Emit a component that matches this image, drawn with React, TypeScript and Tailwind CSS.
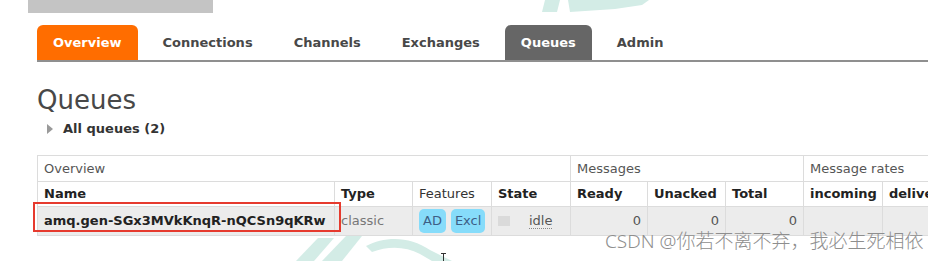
import React from "react";

const tabs = ["Overview", "Connections", "Channels", "Exchanges", "Queues", "Admin"];

function Cell({
  w,
  children,
  className = "",
}: {
  w: string;
  children?: React.ReactNode;
  className?: string;
}) {
  return (
    <div className={"shrink-0 h-full flex items-center px-[6px] border-r border-[#dcdcdc] whitespace-nowrap overflow-hidden " + w + " " + className}>
      {children}
    </div>
  );
}

export default function App() {
  return (
    <div
      className="relative w-[950px] h-[261px] overflow-hidden bg-white text-[#444]"
      style={{ fontFamily: '"DejaVu Sans", Verdana, sans-serif' }}
    >
      {/* watermark shapes behind */}
      <svg className="absolute left-0 top-0 pointer-events-none" width="950" height="261">
        <path d="M545 0 L560 0 L557 12 L542 12 Z" fill="#d3ece6" />
        <path d="M568 0 L649 0 L642 5 L615 9 L570 12 Z" fill="#d3ece6" />
        <path d="M296 261 L318 238 L334 238 L314 261 Z" fill="#d3ece6" />
        <path d="M322 261 L346 236 L362 236 L342 261 Z" fill="#d3ece6" />
        <path d="M366 246 C385 236 410 236 430 250 L452 261 L432 261 L420 254 C405 246 388 246 372 252 Z" fill="#d3ece6" />
      </svg>

      <div className="relative">
        <div className="ml-[28px] w-[185px] h-[13px] bg-[#c4c4c4]" />

        {/* tabs */}
        <div className="ml-[37px] mt-[12px] w-[891px] h-[37px] flex items-end gap-[9px] border-b-2 border-[#8f8f8f]">
          {tabs.map((t) => {
            const active = t === "Overview";
            const cur = t === "Queues";
            return (
              <div
                key={t}
                className={
                  "h-[35px] px-[16px] flex items-center rounded-t-[6px] text-[13px] font-bold " +
                  (active
                    ? "bg-[#ff6d00] text-white"
                    : cur
                    ? "bg-[#666666] text-white"
                    : "text-[#484848]")
                }
              >
                {t}
              </div>
            );
          })}
        </div>

        {/* heading */}
        <div className="ml-[37px] mt-[25px] text-[26px] leading-[26px] text-[#484848]">Queues</div>
        <div className="ml-[47px] mt-[7px] flex items-center h-[17px]">
          <svg width="6" height="10" viewBox="0 0 6 10">
            <path d="M0 0 L6 5 L0 10 Z" fill="#9a9a9a" />
          </svg>
          <span className="ml-[10px] text-[13px] font-bold text-[#333]">All queues (2)</span>
        </div>

        {/* table */}
        <div className="ml-[37px] mt-[18px] w-[891px] overflow-hidden text-[13px]">
          <div className="w-[1100px] border-t border-l border-[#dcdcdc]">
            <div className="flex h-[26px] border-b border-[#dcdcdc] text-[#555]">
              <Cell w="w-[533px]">Overview</Cell>
              <Cell w="w-[233px]">Messages</Cell>
              <Cell w="w-[229px]">Message rates</Cell>
            </div>
            <div className="flex h-[25px] border-b border-[#dcdcdc] text-[#222] font-bold">
              <Cell w="w-[297px]">Name</Cell>
              <Cell w="w-[78px]">Type</Cell>
              <Cell w="w-[79px]" className="font-normal text-[#333]">Features</Cell>
              <Cell w="w-[79px]">State</Cell>
              <Cell w="w-[77px]">Ready</Cell>
              <Cell w="w-[78px]">Unacked</Cell>
              <Cell w="w-[78px]">Total</Cell>
              <Cell w="w-[79px]">incoming</Cell>
              <Cell w="w-[150px]">deliver / get</Cell>
            </div>
            <div className="flex h-[29px] border-b border-[#dcdcdc] bg-[#ececec] text-[#555]">
              <Cell w="w-[297px]" className="font-bold text-[#222]">amq.gen-SGx3MVkKnqR-nQCSn9qKRw</Cell>
              <Cell w="w-[78px]" className="text-[#777]">classic</Cell>
              <Cell w="w-[79px]" className="px-[5px] gap-[5px]">
                <span className="rounded-[5px] bg-[#86dcfa] px-[4px] py-[2px] text-[#3d5f86]">AD</span>
                <span className="rounded-[5px] bg-[#86dcfa] px-[4px] py-[2px] text-[#3d5f86]">Excl</span>
              </Cell>
              <Cell w="w-[79px]">
                <span className="w-[12px] h-[10px] bg-[#dadada]" />
                <span className="ml-[19px] border-b border-dotted border-[#888] leading-[15px]">idle</span>
              </Cell>
              <Cell w="w-[77px]" className="justify-end">0</Cell>
              <Cell w="w-[78px]" className="justify-end">0</Cell>
              <Cell w="w-[78px]" className="justify-end">0</Cell>
              <Cell w="w-[79px]"></Cell>
              <Cell w="w-[150px]"></Cell>
            </div>
          </div>
        </div>
      </div>

      {/* red annotation box */}
      <div className="absolute left-[33px] top-[202px] w-[308px] h-[30px] border-2 border-[#e63a2e]" />

      {/* CSDN watermark */}
      <div
        className="absolute left-[605px] top-[229px] text-[19px] leading-[24px] text-[#8e8e8e] whitespace-nowrap font-light"
        style={{ fontFamily: '"Noto Sans", "Noto Sans CJK SC", sans-serif' }}
      >
        CSDN @你若不离不弃，我必生死相依
      </div>

      {/* text cursor */}
      <svg className="absolute left-[440px] top-[253px]" width="7" height="8" viewBox="0 0 7 8">
        <path d="M1 0.5 H6 M3.5 0.5 V8" stroke="#333" strokeWidth="1" fill="none" />
      </svg>
    </div>
  );
}
